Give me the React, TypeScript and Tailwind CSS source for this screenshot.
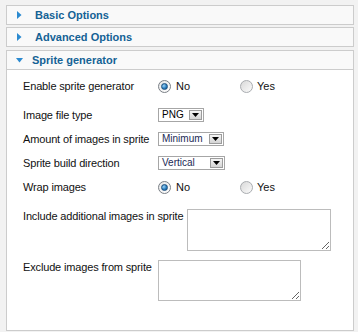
import React from "react";

const font = { fontFamily: '"Liberation Sans", Arial, sans-serif' };

function Radio({ checked }: { checked: boolean }) {
  return checked ? (
    <span className="relative inline-flex h-[13px] w-[13px] items-center justify-center rounded-full border border-[#7a7f86] bg-[linear-gradient(135deg,#e6e6e6,#ffffff)]">
      <span className="h-[7px] w-[7px] rounded-full border border-[#1c4f7e] bg-[radial-gradient(circle_at_35%_35%,#9fd3f5,#2a7fc0_55%,#134f86)]" />
    </span>
  ) : (
    <span className="inline-block h-[13px] w-[13px] rounded-full border border-[#a9acb0] bg-[linear-gradient(135deg,#d9d9d9,#fbfbfb)]" />
  );
}

function Select({ value, width, blue }: { value: string; width: string; blue?: boolean }) {
  return (
    <div className={`flex h-[14px] items-stretch border border-[#a6a6a6] bg-white ${width}`}>
      <span className={`flex-1 pl-[3px] text-[10px] leading-[12px] ${blue ? "text-[#1b2a55]" : "text-black"}`}>{value}</span>
      <span className="m-[1px] flex w-[13px] items-end justify-center border border-[#9c9c9c] bg-[linear-gradient(#f4f4f4,#d4d4d4)] pb-[2px]">
        <svg width="7" height="4" viewBox="0 0 7 4">
          <polygon points="0,0 7,0 3.5,4" fill="#000" />
        </svg>
      </span>
    </div>
  );
}

function Header({ title, open }: { title: string; open?: boolean }) {
  return (
    <div className="flex h-[18px] items-center bg-[#f9f9f9] pl-[10px]">
      {open ? (
        <svg width="7" height="5" viewBox="0 0 7 5" className="mr-[9px] ml-[-1px]">
          <polygon points="0,0 7,0 3.5,4.5" fill="#2b8ad0" />
        </svg>
      ) : (
        <svg width="5" height="8" viewBox="0 0 5 8" className="mr-[13px]">
          <polygon points="0,0 4.5,4 0,8" fill="#2b8ad0" />
        </svg>
      )}
      <span className="text-[11px] font-bold leading-[13px] text-[#146295]">{title}</span>
    </div>
  );
}

function Label({ children, top }: { children: React.ReactNode; top?: boolean }) {
  return (
    <span className={`mr-[4px] min-w-[131px] text-[11px] leading-[13px] tracking-[-0.15px] text-[#111] ${top ? "pt-[1px]" : ""}`}>
      {children}
    </span>
  );
}

function RadioRow() {
  return (
    <div className="flex items-center">
      <Radio checked />
      <span className="ml-[5px] w-[64px] text-[11px] leading-[13px] text-[#111]">No</span>
      <Radio checked={false} />
      <span className="ml-[4px] text-[11px] leading-[13px] text-[#111]">Yes</span>
    </div>
  );
}

export default function App() {
  return (
    <div style={font} className="h-[332px] w-[358px] bg-[#f2f2f2] pl-[6px] pr-[4px] pt-[5px]">
      <div className="border border-[#cccccc]">
        <Header title="Basic Options" />
      </div>
      <div className="mt-[2px] border border-[#cccccc]">
        <Header title="Advanced Options" />
      </div>
      <div className="mt-[3px] border border-[#cccccc]">
        <div className="border-b border-[#cccccc]">
          <Header title="Sprite generator" open />
        </div>
        <div className="flex h-[260px] flex-col bg-white pl-[16px] pt-[6px]">
          <div className="flex h-[20px] items-center">
            <Label>Enable sprite generator</Label>
            <RadioRow />
          </div>
          <div className="mt-[9px] flex h-[20px] items-center">
            <Label>Image file type</Label>
            <Select value="PNG" width="w-[46px]" />
          </div>
          <div className="mt-[4px] flex h-[20px] items-center">
            <Label>Amount of images in sprite</Label>
            <Select value="Minimum" width="w-[66px]" blue />
          </div>
          <div className="mt-[4px] flex h-[20px] items-center">
            <Label>Sprite build direction</Label>
            <Select value="Vertical" width="w-[67px]" blue />
          </div>
          <div className="mt-[4px] flex h-[20px] items-center">
            <Label>Wrap images</Label>
            <RadioRow />
          </div>
          <div className="mt-[12px] flex items-start">
            <Label top>Include additional images in sprite</Label>
            <textarea
              readOnly
              className="h-[42px] w-[144px] border border-[#bcbcbc] bg-white outline-none"
            />
          </div>
          <div className="mt-[9px] flex items-start">
            <Label top>Exclude images from sprite</Label>
            <textarea
              readOnly
              className="h-[41px] w-[143px] border border-[#bcbcbc] bg-white outline-none"
            />
          </div>
        </div>
      </div>
    </div>
  );
}
